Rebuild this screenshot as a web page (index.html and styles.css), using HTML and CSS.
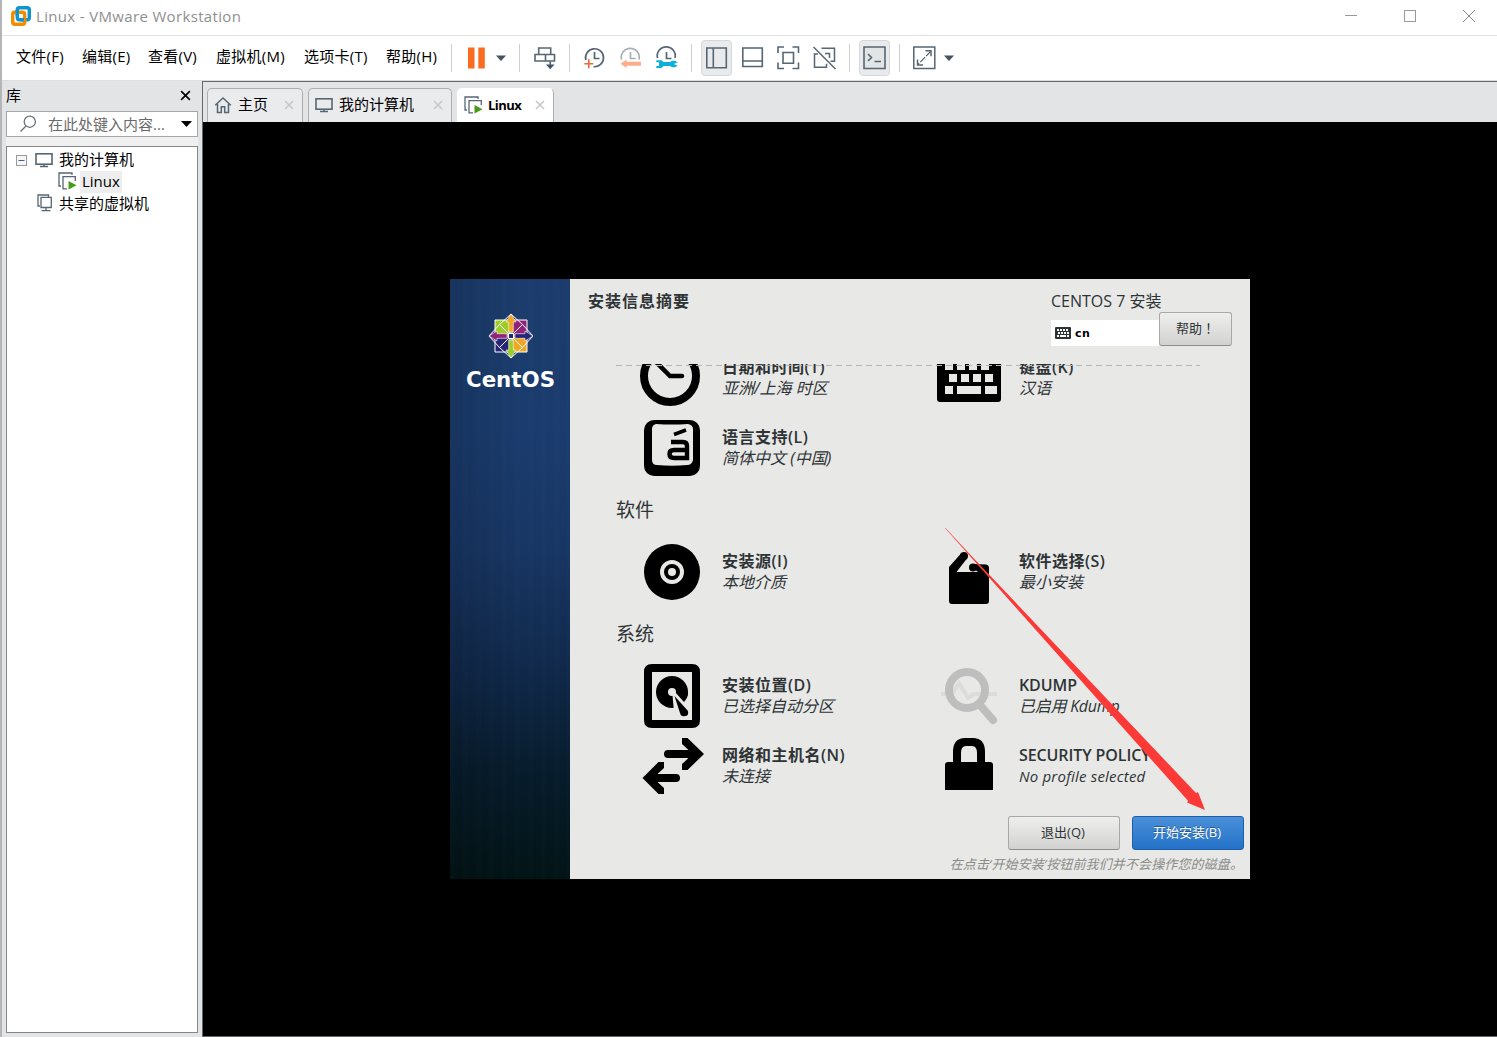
FILE: index.html
```html
<!DOCTYPE html>
<html lang="zh-CN">
<head>
<meta charset="utf-8">
<title>Linux - VMware Workstation</title>
<link rel="stylesheet" href="styles.css">
</head>
<body>
<svg width="0" height="0" class="defs">
  <defs>
    <symbol id="monitor" viewBox="0 0 18 16"><rect x="1" y="1.8" width="16" height="10.4" fill="none" stroke="#566673" stroke-width="1.6"/><path d="M9 12.500v2M5 14.500h8" stroke="#566673" stroke-width="1.500"/></symbol>
    <symbol id="vm" viewBox="0 0 19 18"><path d="M3 14H1V1h13v2" fill="none" stroke="#566673" stroke-width="1.300"/><path d="M9 16.800H5V4.700h12.300V9" fill="none" stroke="#566673" stroke-width="1.300"/><path d="M10.500 9v8.500l8-4.200z" fill="#479b16"/></symbol>
    <symbol id="close" viewBox="0 0 10 10"><path d="M1 1l8 8M9 1L1 9" stroke="currentColor" stroke-width="1.500"/></symbol>
  </defs>
</svg>
<div class="window">
  <header class="titlebar">
    <svg class="logo" width="20" height="20" viewBox="0 0 20 20" fill="none" stroke-width="3.400"><rect x="6.300" y="1.700" width="12" height="12" rx="2" stroke="#0d95cf"/><rect x="1.700" y="6.300" width="12" height="12" rx="2" stroke="#f38b00"/><path d="M6.300 10V4M9 13.700h4" stroke="#0d95cf"/></svg>
    <h1 class="title">Linux - VMware Workstation</h1>
    <div class="controls">
      <svg width="14" height="14" viewBox="0 0 14 14"><path d="M1 6.500h12" stroke="#999"/></svg>
      <svg width="14" height="14" viewBox="0 0 14 14"><rect x="1.500" y="1.500" width="11" height="11" fill="none" stroke="#999"/></svg>
      <svg width="14" height="14" viewBox="0 0 14 14"><path d="M1 1l12 12M13 1L1 13" stroke="#888"/></svg>
    </div>
  </header>

  <nav class="menubar">
    <div class="menu">
      <span class="m66">文件(F)</span><span class="m66">编辑(E)</span><span class="m68">查看(V)</span><span class="m88">虚拟机(M)</span><span class="m82">选项卡(T)</span><span class="m65">帮助(H)</span>
    </div>
    <div class="tools">
      <i class="sep"></i>
      <svg class="tool" viewBox="0 0 36 36"><path d="M10 7.500h6.500v21H10zM20.300 7.500h6.500v21h-6.500z" fill="#fb6c20"/></svg>
      <svg class="caret wide" viewBox="0 0 14 36"><path d="M2 15.500h10l-5 5.500z" fill="#435363"/></svg>
      <i class="sep"></i>
      <svg class="tool" viewBox="0 0 36 36" fill="none" stroke="#566673" stroke-width="1.600"><path d="M12.700 14.500v-6.500h12v6.500M9 14.500h19.500v6.500H9zM19.500 14.500v6.500M24.200 21v7"/><path d="M20 24.500h8.500l-4.300 4.800z" fill="#435363" stroke="none"/></svg>
      <i class="sep"></i>
      <svg class="tool" viewBox="0 0 36 36" fill="none" stroke="#566673" stroke-width="1.700"><path d="M9.800 20A9 9 0 1 1 17.500 26.700M18.500 12v6.500h5"/><path d="M8.300 23.800h9M12.800 19.300v9" stroke="#ee6a35" stroke-width="1.600"/></svg>
      <svg class="tool" viewBox="0 0 36 36" fill="none" stroke="#a9b0b5" stroke-width="1.700"><path d="M9.500 19.500A9 9 0 1 1 27 19.500M18.500 12v6.500h5"/><path d="M8.500 23.800l6-4.200v2.200H29v4H14.500V28z" fill="#fcae8a" stroke="none"/></svg>
      <svg class="tool" viewBox="0 0 36 36" fill="none" stroke="#566673" stroke-width="1.700"><path d="M9.500 18A9 9 0 1 1 27 18M18.500 12v6.500h5"/><path d="M8.300 20.200h5.200l2 1.700h6.500l2-1.200h3.500l2 2-3 .8v1l3 .8-2 2h-3.500l-2-1.400h-6.500l-2 2.100H8.300v-2h2.700v-3.800H8.300z" fill="#0db1d8" stroke="none"/></svg>
      <i class="sep"></i>
      <svg class="tool" viewBox="0 0 36 36" fill="none" stroke="#566673" stroke-width="1.600"><rect x="3.500" y=".5" width="30" height="35" rx="3.500" fill="#e9eaec" stroke="#d6d7d9" stroke-width="1"/><path d="M8.800 8h19.500v19.700H8.800zM15.300 8v19.700"/></svg>
      <svg class="tool" viewBox="0 0 36 36" fill="none" stroke="#566673" stroke-width="1.600"><path d="M8.800 8h19.500v18.500H8.800zM8.800 21h19.500"/></svg>
      <svg class="tool" viewBox="0 0 36 36" fill="none" stroke="#566673" stroke-width="1.600"><path d="M8 13V7h6M22.500 7h6v6M28.500 22.500v6h-6M14 28.500H8v-6M13 12.500h10.500V23.200H13z"/></svg>
      <svg class="tool" viewBox="0 0 36 36" fill="none" stroke="#566673" stroke-width="1.500"><path d="M15.500 8.200h13v13h-4M23.500 18v-4.500H19M12 14H8.500v13.200h12v-3.500M7.500 7l22 22"/></svg>
      <i class="sep"></i>
      <svg class="tool" viewBox="0 0 36 36" fill="none" stroke="#566673" stroke-width="1.600"><rect x="3.500" y=".5" width="30" height="35" rx="3.500" fill="#e9eaec" stroke="#d6d7d9" stroke-width="1"/><path d="M8 7h21v21.500H8z" fill="#e2e4e6"/><path d="M12 14l3.500 3.500L12 21M18.500 21.500h6.500"/></svg>
      <i class="sep"></i>
      <svg class="tool" viewBox="0 0 36 36" fill="none" stroke="#566673" stroke-width="1.500"><path d="M7.800 7h21v21.500h-21zM19.500 10.800H25v5.500M11.500 19.500v5.500H17"/><path d="M25 11l-13 13.500" stroke-width="1.200" stroke-dasharray="7 1.500"/></svg>
      <svg class="caret" viewBox="0 0 14 36"><path d="M2 15.500h10l-5 5.500z" fill="#435363"/></svg>
    </div>
  </nav>

  <div class="body">
    <aside class="library">
      <div class="lib-head"><span>库</span><svg class="lib-close" viewBox="0 0 10 10"><use href="#close"/></svg></div>
      <div class="search">
        <svg width="18" height="18" viewBox="0 0 18 18" fill="none" stroke="#667078" stroke-width="1.300"><circle cx="10.800" cy="6.700" r="5.600"/><path d="M7 11l-5.500 5.500"/></svg>
        <span>在此处键入内容...</span>
        <svg width="11" height="6" viewBox="0 0 11 6"><path d="M0 0h11L5.500 6z"/></svg>
      </div>
      <ul class="tree">
        <li class="root"><svg width="11" height="11" viewBox="0 0 11 11"><rect x=".5" y=".5" width="10" height="10" fill="#f6f6f6" stroke="#9a9a9a"/><path d="M2.500 5.500h6" stroke="#4560a8"/></svg><svg width="18" height="16"><use href="#monitor"/></svg><span>我的计算机</span></li>
        <li class="child"><svg width="19" height="18"><use href="#vm"/></svg><span class="picked">Linux</span></li>
        <li class="shared"><svg width="16" height="18" viewBox="0 0 16 18" fill="none" stroke="#566673" stroke-width="1.300"><path d="M3 12H1V1h10.500v2M4 3.300h10.300v10.200H4zM9 13.500v3M4.500 16.700h9"/></svg><span>共享的虚拟机</span></li>
      </ul>
    </aside>

    <main class="workspace">
      <div class="tabs">
        <div class="tab home"><svg width="18" height="18" viewBox="0 0 18 18" fill="none" stroke="#566673" stroke-width="1.500"><path d="M1.200 9.300L9 2l7.800 7.300M3.500 8v8.500h3.800v-5.800h3.400v5.800h3.800V8"/></svg><span>主页</span><svg class="x"><use href="#close"/></svg></div>
        <div class="tab pc"><svg width="18" height="16"><use href="#monitor"/></svg><span>我的计算机</span><svg class="x"><use href="#close"/></svg></div>
        <div class="tab active"><svg width="19" height="18"><use href="#vm"/></svg><span>Linux</span><svg class="x"><use href="#close"/></svg></div>
      </div>
      <div class="console">
        <section class="installer">
          <div class="brand">
            <svg width="46" height="46" viewBox="-23 -23 46 46" stroke="#fff" stroke-width="1">
              <path d="M-16-16h15v15h-15z" fill="#9ccd2a"/><path d="M1-16h15v15h-15z" fill="#932279"/><path d="M-16 1h15v15h-15z" fill="#262577"/><path d="M1 1h15v15h-15z" fill="#efa724"/>
              <path d="M-1-1L-11.500-11.500 0-22 11.500-11.500 1-1M1-1L11.500-11.500 22 0 11.500 11.500 1 1M1 1L11.500 11.500 0 22-11.500 11.500-1 1M-1 1L-11.500 11.500-22 0-11.500-11.500-1-1" fill="none"/>
              <path d="M-2.300-4v-10H-5L0-22 5-14H2.300v10z" fill="#efa724" stroke-width=".6"/><path d="M4-2.300h10V-5L22 0 14 5V2.300H4z" fill="#262577" stroke-width=".6"/><path d="M2.300 4v10H5L0 22-5 14h2.700V4z" fill="#9ccd2a" stroke-width=".6"/><path d="M-4 2.300h-10V5L-22 0-14-5v2.700h10z" fill="#932279" stroke-width=".6"/>
              <path d="M-2.500-2.500h5v5h-5z" fill="#262577"/>
            </svg>
            <svg class="word" width="96" height="28" viewBox="0 0 96 28"><text x="0" y="21" textLength="89" lengthAdjust="spacingAndGlyphs">CentOS</text></svg>
          </div>
          <div class="summary">
            <div class="top">
              <h2>安装信息摘要</h2>
              <div class="product">
                <span class="release">CENTOS 7 安装</span>
                <div class="kb-row">
                  <div class="layout"><svg width="16" height="12" viewBox="0 0 16 12"><rect width="16" height="12" rx="1" fill="#2e3436"/><path d="M2 3h12M3 6h11" stroke="#fff" stroke-width="2" stroke-dasharray="2 1"/><path d="M2 9h2M5 9h6M12 9h2" stroke="#fff" stroke-width="2"/></svg><b>cn</b></div>
                  <button class="btn help">帮助<span lang="zh-TW">！</span></button>
                </div>
              </div>
            </div>

            <div class="spokes">
              <div class="grid first">
                <div class="spoke"><svg viewBox="0 0 64 64" fill="none" stroke="#000"><circle cx="30" cy="30" r="26" stroke-width="8"/><path d="M16 16l14 14h12" stroke-width="4.500" stroke-linecap="round"/></svg><p><b>日期和时间(T)</b><em>亚洲/上海 时区</em></p></div>
                <div class="spoke"><svg viewBox="0 0 64 64"><rect y="8" width="64" height="48" rx="3"/><path d="M8 16h8v8H8zM20 16h8v8h-8zM32 16h8v8h-8zM44 16h8v8h-8zM12 28h8v8h-8zM24 28h8v8h-8zM36 28h8v8h-8zM48 28h8v8h-8zM8 40h8v8H8zM20 40h24v8H20zM48 40h12v8H48z" fill="#e8e8e6"/></svg><p><b>键盘(K)</b><em>汉语</em></p></div>
                <div class="spoke"><svg viewBox="0 0 64 64"><rect x="4" y="4" width="56" height="56" rx="10"/><path d="M16 8Q32 9 48 8Q53 9 53 13V44Q52 49 47 49Q32 50.500 17 49Q12 49 12 44V13Q12 9 16 8z" fill="#e8e8e6"/><path d="M34 18.500l12-4.500" stroke="#000" stroke-width="3.500"/><path d="M31 26h12q4 0 4 4V42H34q-4.500 0-4.500-4T34 34h12" fill="none" stroke="#000" stroke-width="4.400"/></svg><p><b>语言支持(L)</b><em>简体中文 (中国)</em></p></div>
              </div>
              <h3>软件</h3>
              <div class="grid">
                <div class="spoke"><svg viewBox="0 0 64 64"><circle cx="32" cy="32" r="28"/><circle cx="32" cy="32" r="10" fill="none" stroke="#e8e8e6" stroke-width="4"/><circle cx="32" cy="32" r="4" fill="#e8e8e6"/></svg><p><b>安装源(I)</b><em>本地介质</em></p></div>
                <div class="spoke"><svg viewBox="0 0 64 64"><path d="M12 32V27L24 13.500L30 18.500L19.500 32H41L36 28V24L49 24.500Q52 25 52 28V61q0 3-3 3H15q-3 0-3-3z"/><circle cx="27" cy="16" r="4"/><circle cx="36" cy="27.500" r="4"/></svg><p><b>软件选择(S)</b><em>最小安装</em></p></div>
              </div>
              <h3>系统</h3>
              <div class="grid">
                <div class="spoke"><svg viewBox="0 0 64 64"><path d="M12 0h40q8 0 8 8v48q0 8-8 8H12q-8 0-8-8V8q0-8 8-8zM12 8v48h40V8z" fill-rule="evenodd"/><circle cx="32" cy="28" r="16"/><path d="M32 26l2 22h18V38L36 28z" fill="#e8e8e6"/><path d="M48 28a16 16 0 0 1-4 10l-9-10z"/><circle cx="32" cy="28" r="4" fill="#e8e8e6"/><path d="M34.500 32L48 47q1 5-3 5-4 1-5-3z"/></svg><p><b>安装位置(D)</b><em>已选择自动分区</em></p></div>
                <div class="spoke"><svg viewBox="0 0 64 64" fill="none"><path d="M4 30h11l7-11 9 15 6-4h23" stroke="#dcdcda" stroke-width="4"/><circle cx="30" cy="26" r="18" stroke="#bebebe" stroke-width="8"/><path d="M43 41l13 15" stroke="#bebebe" stroke-width="8" stroke-linecap="round"/></svg><p><b class="caps">KDUMP</b><em class="tight">已启用 Kdump</em></p></div>
                <div class="spoke"><svg viewBox="0 0 64 64"><path d="M42 4h5.500l16.500 16-16.500 16H42v-6l6.500-6H28q-4 0-4-4t4-4h20.500L42 10zM24 28h-5.500L2.500 44l16 16H24v-6l-6.500-6H36q4 0 4-4t-4-4H17.500L24 34z"/></svg><p><b>网络和主机名(N)</b><em>未连接</em></p></div>
                <div class="spoke"><svg viewBox="0 0 64 64"><path d="M8 56V31q0-3 3-3h5V18Q16 4 28 4h8q12 0 12 14v10h5q3 0 3 3v25zM24 28h16V19q0-7-5-7h-6q-5 0-5 7z" fill-rule="evenodd"/></svg><p><b class="caps">SECURITY POLICY</b><em class="latin">No profile selected</em></p></div>
              </div>
            </div>

            <div class="actions"><button class="btn">退出(Q)</button><button class="btn primary">开始安装(B)</button></div>
            <p class="note">在点击‘开始安装’按钮前我们并不会操作您的磁盘。</p>
          </div>
          <svg class="arrow" viewBox="0 0 262 284"><path d="M.5.500L2 1.500 249 268 254 265 261 283 243 275.500 246 271Z M.5.500L252 266 246 276Z" fill="#fb3a38"/></svg>
        </section>
      </div>
    </main>
  </div>
</div>
</body>
</html>
```

FILE: styles.css
```css
* { box-sizing: border-box; }
body {
  margin: 0;
  width: 1497px;
  height: 1037px;
  overflow: hidden;
  background: #fff;
  color: #000;
  font: 15px/22px "Open Sans", "Noto Sans CJK SC", sans-serif;
}
h1, h2, h3, p, ul { margin: 0; padding: 0; font-weight: 400; }
svg { display: block; flex: none; }
.defs { position: absolute; }

.window {
  height: 1037px;
  display: flex;
  flex-direction: column;
  border-left: 2px solid #b4b5b7;
}
.titlebar {
  height: 36px;
  display: flex;
  align-items: center;
  border-bottom: 1px solid #e0e1e3;
  padding: 0 21px 3px 9px;
}
.title { margin-left: 5px; font-size: 15px; color: #8f8f8f; letter-spacing: .34px; }
.controls { margin-left: auto; display: flex; gap: 45px; }

.menubar { height: 45px; display: flex; align-items: center; border-bottom: 1px solid #dcdddf; }
.menu { display: flex; padding: 0 0 4px 14px; white-space: nowrap; letter-spacing: .25px; }
.m66 { width: 66px; }
.m68 { width: 68px; }
.m88 { width: 88px; }
.m82 { width: 82px; }
.m65 { width: 65px; }
.tools { display: flex; align-items: center; }
.sep { width: 1px; height: 28px; margin-right: 6px; background: #cfd0d2; }
.tool { width: 36px; height: 36px; }
.tool + .sep { margin-left: 7px; }
.caret { width: 14px; height: 36px; }
.caret.wide { margin-right: 11px; }

.body { flex: 1; min-height: 0; display: flex; }
.library {
  width: 200px;
  background: #e3e4e6;
  padding: 0 4px 4px;
  display: flex;
  flex-direction: column;
}
.lib-head { height: 30px; display: flex; align-items: center; justify-content: space-between; padding: 0 7px 2px 0; }
.lib-close { width: 11px; height: 11px; color: #000; }
.search {
  height: 26px;
  display: flex;
  align-items: center;
  border: 1px solid #a5a6a8;
  background: #fff;
  padding: 0 5px 0 12px;
  color: #6b6b6b;
}
.search span { flex: 1; margin-left: 11px; white-space: nowrap; }
.tree {
  flex: 1;
  margin-top: 9px;
  padding: 2px 0;
  border: 1px solid #83868c;
  background: #fff;
  list-style: none;
  box-shadow: 0 -9px #f0f0f0;
}
.tree li { height: 22px; display: flex; align-items: center; }
.tree li > :last-child { padding-bottom: 2px; line-height: 20px; }
.root { padding-left: 9px; gap: 6px; }
.root svg + svg { margin: 0 0 1px 2px; }
.child { padding-left: 51px; gap: 3px; }
.child svg, .shared svg { margin-bottom: 2px; }
.shared { padding-left: 30px; gap: 6px; }
.tree li > .picked { padding: 0 2px 2px; background: #eee; }

.workspace {
  flex: 1;
  display: flex;
  flex-direction: column;
  border-left: 1px solid #66696c;
  border-top: 1px solid #66696c;
  border-bottom: 1px solid #66696c;
  background: #000;
}
.tabs { height: 40px; display: flex; align-items: flex-end; gap: 5px; padding-left: 4px; background: #e3e4e6; }
.tab {
  height: 34px;
  display: flex;
  align-items: center;
  padding: 0 0 2px 6px;
  border: 1px solid #acadb0;
  border-bottom: 0;
  border-radius: 5px 5px 0 0;
  background: #eaebed;
  white-space: nowrap;
}
.tab span { margin-left: 6px; padding-bottom: 1px; }
.tab .x { width: 10px; height: 10px; margin: 0 8px 0 auto; color: #c6c6c6; }
.home { width: 96px; }
.pc { width: 144px; }
.active { width: 97px; background: #fff; border-left-color: #fff; border-top-color: #fff; font-size: 13px; font-weight: 700; }
.active span { margin-left: 5px; padding: 0; letter-spacing: -.55px; }

.console { flex: 1; display: flex; align-items: center; justify-content: center; }
.installer { position: relative; width: 800px; height: 600px; display: flex; background: #e8e8e6; color: #2e3436; }
.brand {
  width: 120px;
  padding: 34px 0 0 16px;
  background:
    linear-gradient(90deg, rgba(0, 0, 0, .14), transparent 60%),
    repeating-linear-gradient(90deg, rgba(255, 255, 255, .006) 0 5px, transparent 5px 13px),
    linear-gradient(#1b3c6c, #1a3c6e 25%, #183664 45%, #10294b 65%, #071c2c 82%, #021416);
}
.brand svg:first-child { margin-left: 22px; }
.word { margin-top: 7px; }
.word text { font: 700 21px "DejaVu Sans", sans-serif; fill: #fff; }

.summary { flex: 1; }
.top { height: 85px; display: flex; justify-content: space-between; padding: 12px 18px 0; }
.top h2 { font-size: 16px; line-height: 21px; font-weight: 700; letter-spacing: 1px; }
.product { width: 181px; }
.release { display: block; line-height: 21px; white-space: nowrap; font-size: 16px; }
.kb-row { display: flex; align-items: flex-end; }
.layout { width: 108px; height: 26px; display: flex; align-items: center; gap: 4px; padding-left: 4px; background: #fff; color: #000; font: 700 11px "DejaVu Sans", sans-serif; letter-spacing: .6px; }
.btn {
  width: 112px;
  height: 34px;
  padding: 0 2px 4px 0;
  border: 1px solid #a8a8a6;
  border-bottom-color: #8c8c8a;
  border-radius: 3px;
  background: linear-gradient(#eeeeec, #d2d2d0);
  color: #2e3436;
  font: 13px "Open Sans", "Noto Sans CJK SC", sans-serif;
}
.help { width: 73px; text-align: left; padding-left: 16px; white-space: nowrap; }
.help span { font-family: "Noto Sans CJK TC", sans-serif; }
.primary {
  border-color: #1c5eaa;
  background: linear-gradient(#4a90d9, #2472c8);
  color: #fff;
  text-shadow: 0 -1px rgba(0, 0, 0, .35);
}

.spokes { position: relative; height: 443px; overflow: hidden; padding-left: 46px; }
.spokes::after {
  content: "";
  position: absolute;
  left: 46px;
  top: 1px;
  width: 584px;
  height: 1px;
  background: repeating-linear-gradient(90deg, #b4b5b3 0 6px, transparent 6px 10px);
}
.grid { display: grid; grid-template-columns: 297px 297px; grid-auto-rows: 70px; }
.first { margin-top: -21px; }
.spoke { display: flex; align-items: center; padding-left: 24px; gap: 18px; }
.spoke svg { width: 64px; height: 64px; }
.spoke p { padding-bottom: 1px; }
.spoke b, .spoke em { display: block; line-height: 21px; font-size: 16px; white-space: nowrap; }
.spoke b { font-weight: 600; letter-spacing: .5px; }
.spoke .caps { letter-spacing: -.1px; }
.spoke .tight { letter-spacing: -.25px; }
.spoke .latin { font-size: 15px; letter-spacing: .2px; }
.spokes h3 { height: 54px; line-height: 54px; font-size: 19px; }
.actions { display: flex; gap: 12px; justify-content: flex-end; padding: 9px 6px 0; }
.note { padding: 4px 7px 0; text-align: right; font-size: 13px; line-height: 20px; font-style: italic; color: #8b8c8a; white-space: nowrap; letter-spacing: .12px; }
.arrow { position: absolute; left: 494px; top: 248px; width: 262px; height: 284px; }
```
